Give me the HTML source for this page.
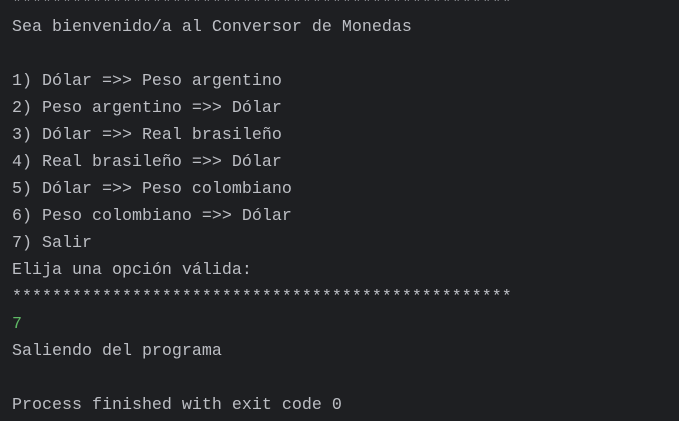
<!DOCTYPE html>
<html><head><meta charset="utf-8"><style>
html,body{margin:0;padding:0;background:#1e1f22;width:679px;height:421px;overflow:hidden}
pre{margin:0;position:absolute;left:12px;top:-13.5px;font-family:"Liberation Mono",monospace;font-size:16.67px;line-height:27px;color:#bcbec4;white-space:pre}
.g{color:#5fb865}
.t{position:relative;top:3px}
</style></head><body>
<pre><span class="t">**************************************************</span>
Sea bienvenido/a al Conversor de Monedas

1) Dólar =>> Peso argentino
2) Peso argentino =>> Dólar
3) Dólar =>> Real brasileño
4) Real brasileño =>> Dólar
5) Dólar =>> Peso colombiano
6) Peso colombiano =>> Dólar
7) Salir
Elija una opción válida:
**************************************************
<span class="g">7</span>
Saliendo del programa

Process finished with exit code 0</pre>
</body></html>
